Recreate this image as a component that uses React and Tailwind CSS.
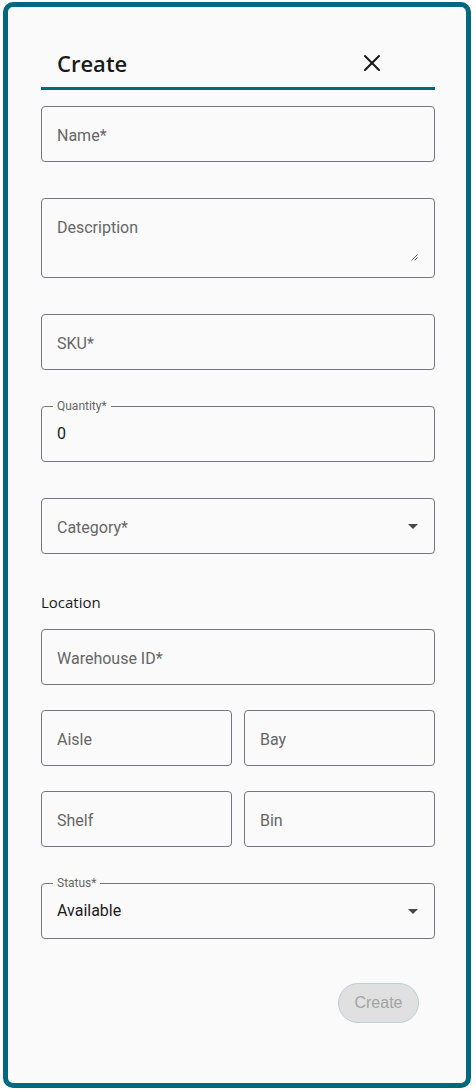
import React from "react";
import { X } from "lucide-react";

const roboto = { fontFamily: "Roboto, 'Liberation Sans', sans-serif" };

function Field({ label, className = "" }) {
  return (
    <div
      className={`h-[56px] border border-[#767680] rounded-[4px] flex items-center pl-[15px] pt-[4px] text-[16px] text-[#666666] ${className}`}
      style={roboto}
    >
      {label}
    </div>
  );
}

function Caret() {
  return (
    <svg width="10" height="5" viewBox="0 0 10 5" className="shrink-0">
      <path d="M0 0 L10 0 L5 5 Z" fill="#49454f" />
    </svg>
  );
}

function FloatField({ label, value, select }) {
  return (
    <div
      className="relative h-[56px] border border-[#767680] rounded-[4px] flex items-center justify-between pl-[15px] pr-[16px] text-[16px] text-[#1c1b1f]"
      style={roboto}
    >
      <span className="absolute left-[11px] top-[-9px] px-[4px] bg-[#fafafa] text-[12px] leading-[16px] text-[#666666]">
        {label}
      </span>
      <span>{value}</span>
      {select && <Caret />}
    </div>
  );
}

export default function App() {
  return (
    <div className="pl-[3px] pt-[2px] bg-white">
      <div className="w-[468px] h-[1086px] border-[5px] border-[#006980] rounded-[10px] bg-[#fafafa] pt-[32px] pl-[33px] pr-[31px] flex flex-col">
        <div className="h-[51px] border-b-[3px] border-[#006980] flex items-center justify-between pl-[16px] pr-[49px]">
          <span
            className="text-[22px] font-semibold text-[#1a1a1a] leading-none"
            style={{ fontFamily: "'Open Sans', 'Noto Sans', sans-serif" }}
          >
            Create
          </span>
          <X size={28} strokeWidth={1.75} color="#1a1a1a" />
        </div>

        <Field label="Name*" className="mt-[16px]" />

        <div
          className="relative mt-[36px] h-[80px] border border-[#767680] rounded-[4px] pl-[15px] pt-[17px] text-[16px] leading-[24px] text-[#666666]"
          style={roboto}
        >
          Description
          <svg width="7" height="7" viewBox="0 0 7 7" className="absolute right-[16px] bottom-[16px]">
            <path d="M0.5 6.5 L6.5 0.5 M3.5 6.5 L6.5 3.5" stroke="#555" strokeWidth="0.9" />
          </svg>
        </div>

        <Field label="SKU*" className="mt-[36px]" />

        <div className="mt-[36px]">
          <FloatField label="Quantity*" value="0" />
        </div>

        <div
          className="mt-[36px] h-[56px] border border-[#767680] rounded-[4px] flex items-center justify-between pl-[15px] pr-[16px] text-[16px] text-[#666666]"
          style={roboto}
        >
          <span className="pt-[4px]">Category*</span>
          <Caret />
        </div>

        <div
          className="mt-[38px] h-[20px] flex items-center text-[15px] text-[#1a1a1a]"
          style={{ fontFamily: "'Open Sans', 'Noto Sans', sans-serif" }}
        >
          Location
        </div>

        <Field label="Warehouse ID*" className="mt-[17px]" />

        <div className="mt-[25px] grid grid-cols-2 gap-[12px]">
          <Field label="Aisle" />
          <Field label="Bay" />
        </div>

        <div className="mt-[25px] grid grid-cols-2 gap-[12px]">
          <Field label="Shelf" />
          <Field label="Bin" />
        </div>

        <div className="mt-[36px]">
          <FloatField label="Status*" value="Available" select />
        </div>

        <div className="mt-[44px] flex justify-end pr-[16px]">
          <div
            className="w-[81px] h-[40px] rounded-full bg-[#e0e0e0] border border-[#bccfd3] flex items-center justify-center text-[16px] text-[#a3a3a3]"
            style={{ fontFamily: "'Liberation Sans', Arial, sans-serif" }}
          >
            Create
          </div>
        </div>
      </div>
    </div>
  );
}
